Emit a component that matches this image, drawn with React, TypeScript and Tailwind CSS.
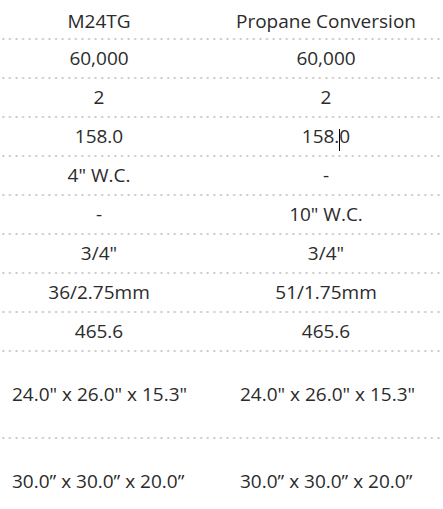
const rows: [string, string][] = [
  ["60,000", "60,000"],
  ["2", "2"],
  ["158.0", "158.0"],
  ['4" W.C.', "-"],
  ["-", '10" W.C.'],
  ['3/4"', '3/4"'],
  ["36/2.75mm", "51/1.75mm"],
  ["465.6", "465.6"],
];

const dims: [string, string][] = [
  ['24.0" x 26.0" x 15.3"', '24.0" x 26.0" x 15.3"'],
  ["30.0\u201d x 30.0\u201d x 20.0\u201d", "30.0\u201d x 30.0\u201d x 20.0\u201d"],
];

function Divider() {
  return (
    <div className="h-[2px] w-full bg-[radial-gradient(circle,#c4c4c4_0.9px,transparent_1.2px)] bg-[length:6.6px_2px]" />
  );
}

function Cell({ children }: { children: React.ReactNode }) {
  return <div className="flex items-center justify-center">{children}</div>;
}

export default function App() {
  return (
    <div
      className="w-[443px] overflow-hidden bg-white text-[19px] leading-none text-[#2b2b2b]"
      style={{ fontFamily: '"Open Sans", "Noto Sans", sans-serif' }}
    >
      <div className="grid h-[38px] w-[454px] grid-cols-[198px_256px] pt-[4px]">
        <Cell>M24TG</Cell>
        <Cell>Propane Conversion</Cell>
      </div>
      <Divider />
      {rows.map(([a, b], i) => (
        <div key={i}>
          <div className="grid h-[37px] w-[454px] grid-cols-[198px_256px]">
            <Cell>{a}</Cell>
            <Cell>
              {i === 2 ? (
                <span>
                  158.
                  <span className="relative">
                    <span className="absolute top-[6px] left-0 h-[22px] w-px bg-black" />
                    0
                  </span>
                </span>
              ) : (
                b
              )}
            </Cell>
          </div>
          <Divider />
        </div>
      ))}
      {dims.map(([a, b], i) => (
        <div key={i}>
          <div className="grid h-[85px] w-[454px] grid-cols-[198px_256px]">
            <div className="flex items-center whitespace-nowrap pl-[12px]">{a}</div>
            <div className="flex items-center whitespace-nowrap pl-[42px]">{b}</div>
          </div>
          <Divider />
        </div>
      ))}
    </div>
  );
}
